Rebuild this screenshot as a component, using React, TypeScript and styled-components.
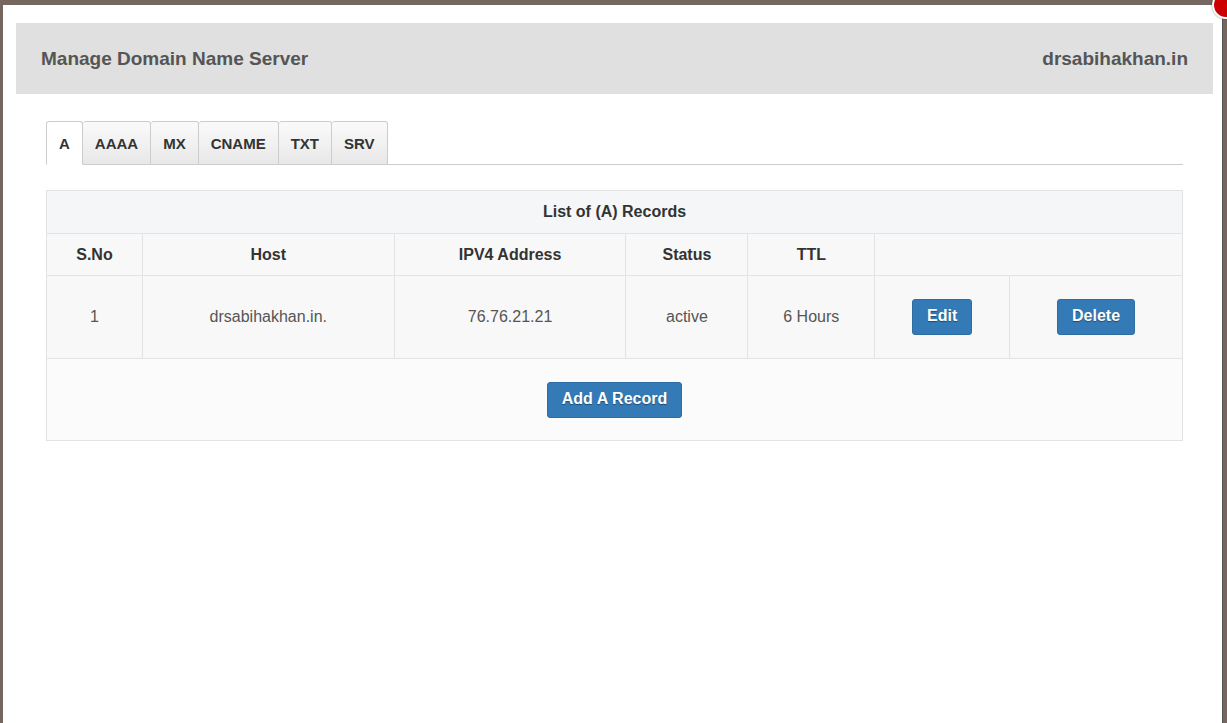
import React from "react";
import styled, { createGlobalStyle } from "styled-components";

const Global = createGlobalStyle`
  html, body { margin: 0; padding: 0; background: #75675d; height: 100%; overflow: hidden; }
  body { font-family: "Liberation Sans", Arial, sans-serif; }
`;

const Frame = styled.div`
  position: relative;
  margin: 5px 4px 0 3px;
  height: 718px;
  background: #fff;
  border-right: 1px solid #555;
  box-sizing: border-box;
  padding: 18px 9px 0 13px;
`;

const Close = styled.div`
  position: absolute;
  right: -18px;
  top: -14px;
  width: 24px;
  height: 24px;
  border-radius: 50%;
  background: #c00;
  border: 2px solid #fff;
  box-shadow: 0 0 2px rgba(0,0,0,0.5);
`;

const Header = styled.div`
  background: #dfe0df;
  height: 71px;
  display: flex;
  align-items: center;
  justify-content: space-between;
  padding: 0 25px;
  font-size: 19px;
  font-weight: bold;
  color: #555;
`;

const Body = styled.div`
  padding: 27px 30px 0 30px;
`;

const Tabs = styled.div`
  display: flex;
  border-bottom: 1px solid #ccc;
  height: 43px;
`;

const Tab = styled.div<{ $active?: boolean }>`
  display: flex;
  align-items: center;
  padding: 0 12px;
  font-size: 15px;
  font-weight: bold;
  color: #333;
  border: 1px solid #ccc;
  border-left-width: ${(p) => (p.$active ? "1px" : "0")};
  border-bottom: ${(p) => (p.$active ? "1px solid #fff" : "1px solid #ccc")};
  margin-bottom: -1px;
  border-radius: 3px 3px 0 0;
  background: ${(p) => (p.$active ? "#fff" : "linear-gradient(#fafafa, #e8e8e8)")};
`;

const Table = styled.table`
  margin-top: 25px;
  width: 100%;
  border-collapse: collapse;
  font-size: 16px;
  color: #555;
  td, th { border: 1px solid #e3e3e3; text-align: center; padding: 0; }
`;

const Caption = styled.th`
  background: #f5f6f7;
  height: 42px;
  color: #333;
  font-size: 16px;
`;

const Th = styled.th`
  background: #f8f8f8;
  height: 41px;
  color: #333;
  font-size: 16px;
`;

const Td = styled.td`
  background: #f8f8f8;
  height: 82px;
`;

const Foot = styled.td`
  background: #fbfbfb;
  height: 81px;
`;

const Btn = styled.button`
  font-family: "Liberation Sans", Arial, sans-serif;
  background: #337ab7;
  border: 1px solid #2e6da4;
  border-radius: 3px;
  color: #fff;
  font-weight: bold;
  font-size: 16px;
  padding: 7px 14px 9px;
  text-shadow: 0 1px 1px rgba(0,0,0,0.4);
`;

export default function App() {
  const widths = [96, 252, 232, 122, 127, 135, 173];
  return (
    <>
      <Global />
      <Frame>
        <Close />
        <Header>
          <span>Manage Domain Name Server</span>
          <span>drsabihakhan.in</span>
        </Header>
        <Body>
          <Tabs>
            {["A", "AAAA", "MX", "CNAME", "TXT", "SRV"].map((t, i) => (
              <Tab key={t} $active={i === 0}>{t}</Tab>
            ))}
          </Tabs>
          <Table>
            <colgroup>
              {widths.map((w, i) => <col key={i} style={{ width: w }} />)}
            </colgroup>
            <tbody>
              <tr><Caption colSpan={7}>List of (A) Records</Caption></tr>
              <tr>
                <Th>S.No</Th><Th>Host</Th><Th>IPV4 Address</Th><Th>Status</Th><Th>TTL</Th><Th colSpan={2}></Th>
              </tr>
              <tr>
                <Td>1</Td><Td>drsabihakhan.in.</Td><Td>76.76.21.21</Td><Td>active</Td><Td>6 Hours</Td>
                <Td><Btn>Edit</Btn></Td><Td><Btn>Delete</Btn></Td>
              </tr>
              <tr><Foot colSpan={7}><Btn>Add A Record</Btn></Foot></tr>
            </tbody>
          </Table>
        </Body>
      </Frame>
    </>
  );
}
